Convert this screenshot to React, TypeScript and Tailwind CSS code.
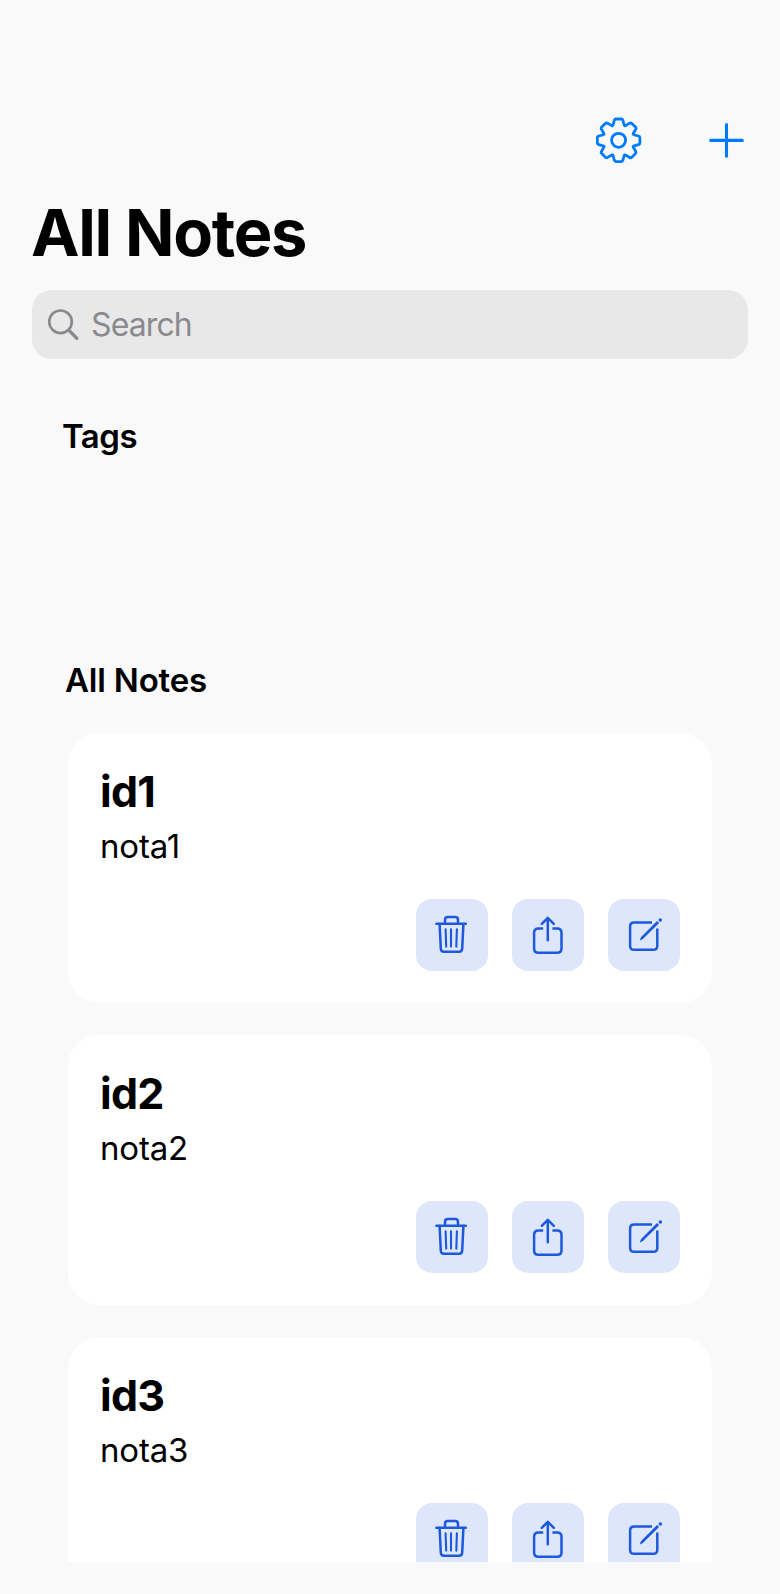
const notes = [
  { title: "id1", body: "nota1" },
  { title: "id2", body: "nota2" },
  { title: "id3", body: "nota3" },
];

function gearOutline(): string {
  const pt = (x: number, y: number, a: number) => {
    const c = Math.cos(a);
    const s = Math.sin(a);
    return `${(x * c - y * s).toFixed(2)} ${(x * s + y * c).toFixed(2)}`;
  };
  let d = "";
  for (let i = 0; i < 8; i++) {
    const a = (i * Math.PI) / 4;
    d += `${i === 0 ? "M" : "L"}${pt(-5.3, -16.2, a)}L${pt(-4.3, -19.9, a)}`;
    d += `Q${pt(-3.9, -21.3, a)} ${pt(-2.6, -21.3, a)}L${pt(2.6, -21.3, a)}`;
    d += `Q${pt(3.9, -21.3, a)} ${pt(4.3, -19.9, a)}L${pt(5.3, -16.2, a)}`;
    d += `Q${pt(0, -14.6, a + Math.PI / 8)} ${pt(-5.3, -16.2, a + Math.PI / 4)}`;
  }
  return d + "Z";
}

function GearIcon() {
  return (
    <svg className="h-[46px] w-[46px]" viewBox="-22.6 -23.3 46 46" fill="none" stroke="currentColor" strokeWidth="2.8" strokeLinejoin="round">
      <path d={gearOutline()} />
      <circle r="7" />
    </svg>
  );
}

function PlusIcon() {
  return (
    <svg className="h-9 w-9" viewBox="0 0 36 36" stroke="currentColor" strokeWidth="3.1" strokeLinecap="round">
      <path d="M17.5 2.6V34.2M1.7 18.4H33.3" />
    </svg>
  );
}

function SearchIcon() {
  return (
    <svg className="h-8 w-8" viewBox="0 0 32 32" fill="none" stroke="currentColor" strokeLinecap="round">
      <circle cx="12.5" cy="12.8" r="11.3" strokeWidth="2.7" />
      <path d="M21.2 21.6L28.8 29.2" strokeWidth="3.4" />
    </svg>
  );
}

function TrashIcon() {
  return (
    <svg className="h-[72px] w-[72px]" viewBox="0 0 72 72" fill="none" stroke="currentColor" strokeWidth="2.5" strokeLinecap="round" strokeLinejoin="round">
      <path d="M20.4 24.7H49.8M29 24V20.9Q29 18.1 31.8 18.1H39.2Q42 18.1 42 20.9V24" />
      <path d="M23.6 25L24.8 49.7Q25 52.7 28 52.7H43Q46 52.7 46.2 49.7L47.4 25" />
      <path d="M29.6 30.2L30.2 47.6M35 30.2V47.6M40.9 30.2L40.3 47.6" strokeWidth="2.1" />
    </svg>
  );
}

function ShareIcon() {
  return (
    <svg className="h-[72px] w-[72px]" viewBox="0 0 72 72" fill="none" stroke="currentColor" strokeWidth="2.5" strokeLinecap="round" strokeLinejoin="round">
      <path d="M31.2 29.5H26.4Q22.1 29.5 22.1 33.8V49.5Q22.1 53.8 26.4 53.8H45.2Q49.5 53.8 49.5 49.5V33.8Q49.5 29.5 45.2 29.5H40.4" strokeLinecap="butt" />
      <path d="M35.8 41.2V19M29.8 24.8L35.8 18.9L41.8 24.8" />
    </svg>
  );
}

function EditIcon() {
  return (
    <svg className="h-[72px] w-[72px]" viewBox="0 0 72 72" fill="none" stroke="currentColor" strokeWidth="2.5">
      <path d="M44 23.5H26.2Q22.1 23.5 22.1 27.6V46.7Q22.1 50.8 26.2 50.8H45.2Q49.3 50.8 49.3 46.7V29.6" />
      <path d="M32.2 41.3Q31.9 40.6 32.4 39.6L33.1 37.9L49 22L51.1 24.1L35.2 39.8L33.5 40.8Q32.7 41.5 32.2 41.3Z" fill="currentColor" stroke="none" />
      <circle cx="52.3" cy="21" r="1.8" fill="currentColor" stroke="none" />
    </svg>
  );
}

const actions = [
  { label: "Delete", Icon: TrashIcon },
  { label: "Share", Icon: ShareIcon },
  { label: "Edit", Icon: EditIcon },
];

function NoteCard({ title, body }: { title: string; body: string }) {
  return (
    <article className="flex h-[270px] shrink-0 flex-col rounded-[32px] bg-white p-8">
      <h3 className="text-[43px] leading-[52px] font-bold tracking-[-0.7px]">{title}</h3>
      <p className="mt-[9px] text-[33px] leading-10 tracking-[-0.2px]">{body}</p>
      <div className="mt-auto flex justify-end gap-6">
        {actions.map(({ label, Icon }) => (
          <button key={label} aria-label={label} className="h-[72px] w-[72px] rounded-[16px] bg-[#dee6fb] text-[#1d5adb]">
            <Icon />
          </button>
        ))}
      </div>
    </article>
  );
}

export default function App() {
  return (
    <main className="flex h-[1594px] w-[780px] flex-col overflow-hidden bg-[#f9f9f9] font-['Inter','Liberation_Sans',sans-serif] text-black">
      <header className="flex h-[198px] shrink-0 items-start justify-end gap-[67px] pt-[117px] pr-[35px] text-[#007aff]">
        <button aria-label="Settings"><GearIcon /></button>
        <button aria-label="Add note" className="mt-[5px]"><PlusIcon /></button>
      </header>
      <h1 className="h-[92px] shrink-0 pl-[31px] text-[65px] leading-[70px] font-bold tracking-[-1.3px]">All Notes</h1>
      <label className="mx-8 flex h-[69px] shrink-0 items-center gap-[11px] rounded-[20px] bg-[#e8e8e8] pl-4 text-[#8a8a8e]">
        <SearchIcon />
        <span className="pt-px text-[32px] leading-10 tracking-[-0.9px]">Search</span>
      </label>
      <section className="h-[244px] shrink-0 pt-[57px] pl-[62px]">
        <h2 className="text-[33px] leading-10 font-semibold tracking-[-0.5px]">Tags</h2>
      </section>
      <h2 className="mt-[57px] ml-[65px] shrink-0 text-[33px] leading-10 font-semibold tracking-[-0.2px]">All Notes</h2>
      <section className="mx-[68px] mt-[33px] mb-8 flex min-h-0 flex-1 flex-col gap-8 overflow-hidden">
        {notes.map((note) => (
          <NoteCard key={note.title} {...note} />
        ))}
      </section>
    </main>
  );
}
